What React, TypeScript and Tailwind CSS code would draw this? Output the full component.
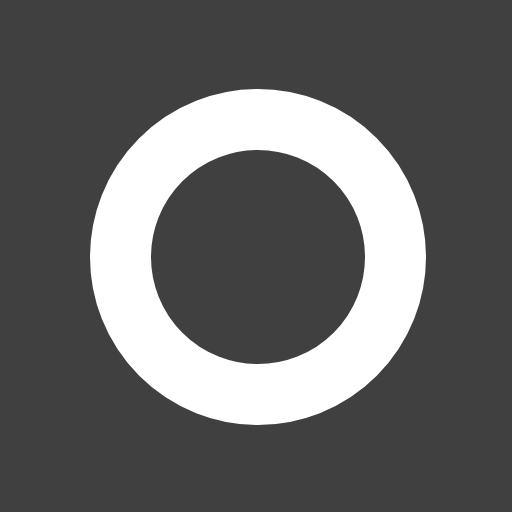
export default function App() {
  return (
    <div className="w-[512px] h-[512px] bg-[#404040] flex items-center justify-center pl-[4px] pt-[2px]">
      <div className="w-[336px] h-[336px] rounded-full border-[61px] border-white" />
    </div>
  );
}
